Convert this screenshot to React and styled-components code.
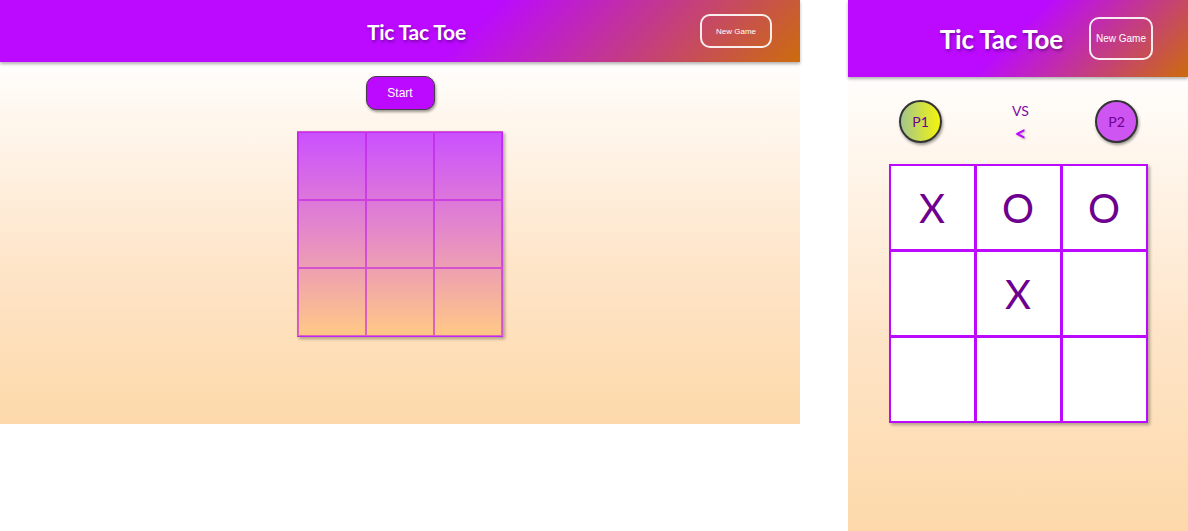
import React from 'react';
import styled, { createGlobalStyle } from 'styled-components';

const GlobalStyle = createGlobalStyle`
  body {
    margin: 0;
    background: #fff;
    font-family: 'Lato', 'Noto Sans', sans-serif;
  }
`

const desktopBoard = ['', '', '', '', '', '', '', '', '']
const mobileBoard = ['X', 'O', 'O', '', 'X', '', '', '', '']

const Page = styled.div`
  display: flex;
  align-items: flex-start;
  gap: 48px;
  width: 1188px;
  height: 531px;
  overflow: hidden;
`

const Screen = styled.div`
  display: flex;
  flex-direction: column;
  align-items: center;
  width: ${props => props.width}px;
  height: ${props => props.height}px;
  background: linear-gradient(to bottom, #ffffff 12%, #fee5c9 62%, #fdd9aa 100%);
`

const Header = styled.header`
  align-self: stretch;
  display: flex;
  align-items: center;
  justify-content: flex-end;
  height: ${props => props.height}px;
  padding-right: ${props => props.padRight}px;
  background: linear-gradient(135deg, #bb0aff ${props => props.stop}%, #cc6c0c 100%);
  box-shadow: 0 2px 3px rgba(0, 0, 0, 0.3);
  position: relative;
  z-index: 1;
  flex-shrink: 0;
`

const Title = styled.h1`
  margin: 0 ${props => props.gap}px 0 0;
  font-family: 'Lato', 'Noto Sans', sans-serif;
  font-weight: 700;
  font-size: ${props => props.size}px;
  color: #fff;
  text-shadow: 1px 2px 3px rgba(40, 0, 60, 0.45);
  letter-spacing: -0.2px;
`

const NewGameButton = styled.button`
  width: ${props => props.w}px;
  height: ${props => props.h}px;
  padding: 0;
  background: transparent;
  border: 2px solid rgba(255, 255, 255, 0.9);
  border-radius: 10px;
  color: #fff;
  font-family: 'Liberation Sans', Arial, sans-serif;
  font-size: ${props => props.size}px;
  cursor: pointer;
`

const StartButton = styled.button`
  margin-top: 14px;
  width: 69px;
  height: 34px;
  padding: 0;
  background: #bb0aff;
  border: 1px solid #4a3a4a;
  border-radius: 10px;
  box-shadow: 1px 2px 3px rgba(0, 0, 0, 0.4);
  color: #fff;
  font-family: 'Liberation Sans', Arial, sans-serif;
  font-size: 12px;
  cursor: pointer;
`

const GradientGrid = styled.div`
  margin-top: 21px;
  display: grid;
  grid-template-columns: repeat(3, 68px);
  grid-template-rows: repeat(3, 68px);
  border: 1px solid rgba(187, 10, 255, 0.6);
  background: linear-gradient(to bottom, #cb50ff 0%, #e58ac8 50%, #ffc985 100%);
  box-shadow: 2px 2px 3px rgba(0, 0, 0, 0.3);
`

const GradientCell = styled.div`
  border: 1px solid rgba(190, 20, 230, 0.55);
`

const PlayersRow = styled.div`
  align-self: stretch;
  display: flex;
  align-items: center;
  justify-content: space-between;
  margin-top: 23px;
  padding: 0 50px 0 51px;
`

const PlayerBadge = styled.div`
  display: flex;
  align-items: center;
  justify-content: center;
  width: 39px;
  height: 39px;
  border-radius: 50%;
  border: 2px solid #333;
  background: ${props => props.bg};
  box-shadow: 1px 2px 3px rgba(0, 0, 0, 0.4);
  color: #6a0090;
  font-size: 14px;
`

const Versus = styled.div`
  display: flex;
  flex-direction: column;
  align-items: center;
  margin-left: 4px;
  color: #7a0aa8;
  font-size: 14px;
  line-height: 14px;
`

const Turn = styled.span`
  margin-top: 8px;
  color: #bb0aff;
  font-weight: 700;
  font-size: 21px;
  line-height: 14px;
  text-shadow: 1px 1px 2px rgba(0, 0, 0, 0.25);
`

const Board = styled.div`
  margin-top: 21px;
  display: grid;
  grid-template-columns: repeat(3, 83px);
  grid-template-rows: repeat(3, 83px);
  gap: 3px;
  padding: 2px;
  background: #bb0aff;
  box-shadow: 2px 2px 3px rgba(0, 0, 0, 0.3);
`

const Square = styled.div`
  display: flex;
  align-items: center;
  justify-content: center;
  background: #fff;
  color: #6e0090;
  font-family: 'Lato', 'Noto Sans', sans-serif;
  font-size: 40px;
`

function App() {
  return (
    <Page>
      <GlobalStyle />
      <Screen width={800} height={424}>
        <Header height={62} padRight={28} stop={58}>
          <Title size={21} gap={234}>Tic Tac Toe</Title>
          <NewGameButton w={72} h={34} size={8}>New Game</NewGameButton>
        </Header>
        <StartButton>Start</StartButton>
        <GradientGrid>
          {desktopBoard.map((v, i) => <GradientCell key={i}>{v}</GradientCell>)}
        </GradientGrid>
      </Screen>

      <Screen width={340} height={531}>
        <Header height={77} padRight={35} stop={48}>
          <Title size={26} gap={26}>Tic Tac Toe</Title>
          <NewGameButton w={64} h={43} size={10}>New Game</NewGameButton>
        </Header>
        <PlayersRow>
          <PlayerBadge bg="linear-gradient(to right, #a2c58e, #f5f50c)">P1</PlayerBadge>
          <Versus>
            VS
            <Turn>&lt;</Turn>
          </Versus>
          <PlayerBadge bg="#cf55f2">P2</PlayerBadge>
        </PlayersRow>
        <Board>
          {mobileBoard.map((v, i) => <Square key={i}>{v}</Square>)}
        </Board>
      </Screen>
    </Page>
  );
}

export default App;
